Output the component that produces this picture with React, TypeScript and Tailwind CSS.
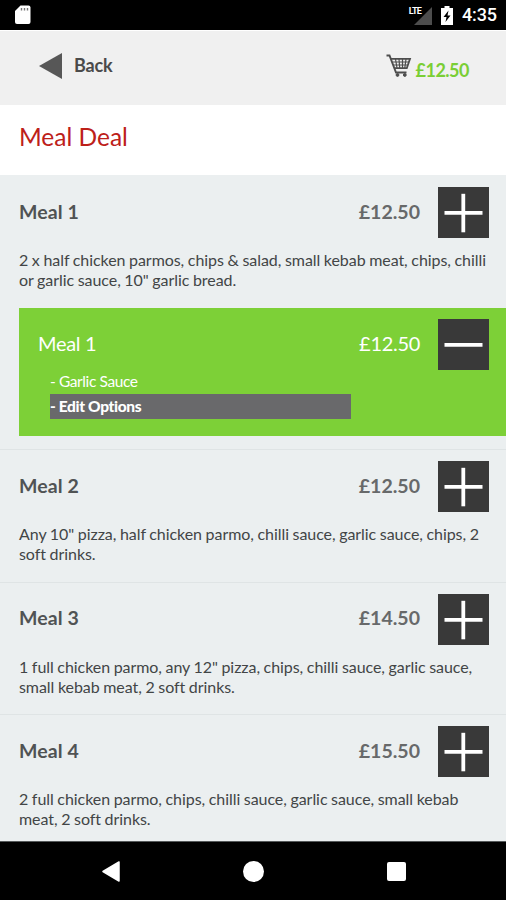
import { useState } from "react";

interface Meal {
  name: string;
  price: string;
  description: string;
  selection?: string[];
}

const MEALS: Meal[] = [
  {
    name: "Meal 1",
    price: "£12.50",
    description:
      '2 x half chicken parmos, chips & salad, small kebab meat, chips, chilli or garlic sauce, 10" garlic bread.',
    selection: ["Garlic Sauce"],
  },
  {
    name: "Meal 2",
    price: "£12.50",
    description:
      'Any 10" pizza, half chicken parmo, chilli sauce, garlic sauce, chips, 2 soft drinks.',
  },
  {
    name: "Meal 3",
    price: "£14.50",
    description:
      '1 full chicken parmo, any 12" pizza, chips, chilli sauce, garlic sauce, small kebab meat, 2 soft drinks.',
  },
  {
    name: "Meal 4",
    price: "£15.50",
    description:
      "2 full chicken parmo, chips, chilli sauce, garlic sauce, small kebab meat, 2 soft drinks.",
  },
];

export default function App() {
  const [meals] = useState<Meal[]>(MEALS);

  return (
    <div className="flex h-[900px] w-[506px] flex-col overflow-hidden bg-[#ebeff0] font-['Lato',sans-serif]">
      <StatusBar />
      <Header total="£12.50" />
      <div className="flex h-[70px] shrink-0 items-center bg-white pl-[19px] pb-[5px] text-[24.5px] text-[#bd2019]">
        Meal Deal
      </div>
      <div className="flex min-h-0 flex-1 flex-col overflow-hidden">
        {meals.map((meal, index) => (
          <MealItem key={meal.name} meal={meal} isFirst={index === 0} />
        ))}
      </div>
      <NavigationBar />
    </div>
  );
}

function StatusBar() {
  return (
    <div className="flex h-[30px] shrink-0 items-center bg-black pl-[15px] pr-[9px] text-white">
      <svg width="16" height="20" viewBox="0 0 16 20">
        <path
          d="M5.5 0.5h8a2 2 0 0 1 2 2v14.500a2 2 0 0 1-2 2h-11.500a2 2 0 0 1-2-2V6z"
          fill="#fff"
        />
        <path d="M6.500 3v2.500M9.500 3v2.500M12.500 3v2.500" stroke="#777" strokeWidth="1.400" />
      </svg>
      <div className="flex-1" />
      <div className="flex h-[20px] items-end">
        <span className="h-[19px] font-['Roboto',sans-serif] text-[9px] font-bold leading-[10px] tracking-[-0.8px]">
          LTE
        </span>
        <svg className="-ml-[7px]" width="18" height="18" viewBox="0 0 18 18">
          <path d="M18 0v18H0z" fill="#4d4d4d" />
        </svg>
      </div>
      <svg className="ml-[9px]" width="12" height="19" viewBox="0 0 12 19">
        <path d="M3.500 0h5v2H12v17H0V2h3.500z" fill="#fff" />
        <path d="M7.500 4.500L2.500 11h3L4.500 16 9.500 9.500h-3z" fill="#000" />
      </svg>
      <span className="ml-[9px] font-['Roboto',sans-serif] text-[18px] font-medium leading-[30px] tracking-[-0.1px]">
        4:35
      </span>
    </div>
  );
}

function Header(props: { total: string }) {
  return (
    <div className="flex h-[75px] shrink-0 items-start justify-between border-t border-white bg-[#f0f0f0] pl-[39px] pr-[37px]">
      <div className="flex h-[70px] items-center gap-[12px]">
        <svg width="23" height="26" viewBox="0 0 23 26">
          <path d="M23 0v26L0 13z" fill="#575757" />
        </svg>
        <span className="pb-[2px] text-[18px] font-bold tracking-[-0.2px] text-[#4a4a4a]">
          Back
        </span>
      </div>
      <div className="flex items-start pt-[23px]">
        <CartIcon />
        <span className="ml-[4px] mt-[4px] text-[18px] font-bold leading-[24px] tracking-[-0.5px] text-[#7ace35]">
          {props.total}
        </span>
      </div>
    </div>
  );
}

function CartIcon() {
  return (
    <svg width="26" height="24" viewBox="0 0 26 24" fill="none" stroke="#4d4d4d">
      <path d="M0.500 1.500h3L10 18.500h10.500" strokeWidth="1.900" />
      <path d="M5 4.800H24L20.800 14.200H8.500" strokeWidth="1.800" />
      <path
        d="M6.500 8h16M7.500 11h14M9.500 5l1.500 9M13 5l0.700 9M16.500 5v9M20 5l-1.200 9"
        strokeWidth="1.200"
      />
      <circle cx="11.500" cy="21" r="1.400" fill="#4d4d4d" />
      <circle cx="18.800" cy="21" r="1.400" fill="#4d4d4d" />
    </svg>
  );
}

function MealItem(props: { meal: Meal; isFirst: boolean }) {
  const { meal, isFirst } = props;

  return (
    <div
      className={`shrink-0 border-t ${
        isFirst ? "border-[#ebeff0]" : "border-[#dfe4e5]"
      } ${meal.selection ? "pb-[13px]" : "pb-[17.5px]"}`}
    >
      <div className="flex items-center pl-[19px] pr-[17px] pt-[11px] text-[19.5px] font-bold">
        <span className="flex-1 pb-[2px] tracking-[0.1px] text-[#505354]">{meal.name}</span>
        <span className="pb-[2px] text-[#67696a]">{meal.price}</span>
        <QuantityButton type="plus" />
      </div>
      <p className="mt-[12px] h-[40px] pl-[19px] pr-[14px] text-[16px] leading-[20px] tracking-[-0.06px] text-[#424546] [word-spacing:-0.4px]">
        {meal.description}
      </p>
      {meal.selection && (
        <div className="ml-[19px] mt-[18px] h-[128px] bg-[#7dd037] pt-[11px] text-white">
          <div className="flex items-center pl-[19px] pr-[17px] text-[20px] tracking-[-0.3px]">
            <span className="flex-1 pb-[3px]">{meal.name}</span>
            <span className="pb-[3px]">{meal.price}</span>
            <QuantityButton type="minus" />
          </div>
          <div className="ml-[31px] w-[301px] text-[15.5px]">
            {meal.selection.map((option) => (
              <div
                key={option}
                className="h-[24px] leading-[22px] tracking-[-0.4px]"
              >
                - {option}
              </div>
            ))}
            <div className="h-[25px] bg-[#69696b] font-black leading-[25px] tracking-[-0.35px]">
              - Edit Options
            </div>
          </div>
        </div>
      )}
    </div>
  );
}

function QuantityButton(props: { type: "plus" | "minus" }) {
  return (
    <button className="ml-[18px] h-[51px] w-[51px] bg-[#393939]">
      <svg width="51" height="51" viewBox="0 0 51 51" stroke="#fff" strokeWidth="3.800">
        <path d="M6.500 25.800h38" />
        {props.type === "plus" && <path d="M25.300 6.800v38.500" />}
      </svg>
    </button>
  );
}

function NavigationBar() {
  return (
    <div className="flex h-[59px] shrink-0 items-center justify-between border-t border-[#565a5b] bg-black pl-[102px] pr-[100px]">
      <svg width="18" height="21" viewBox="0 0 18 21">
        <path
          d="M17 1v19L1 10.500z"
          fill="#fff"
          stroke="#fff"
          strokeWidth="1.500"
          strokeLinejoin="round"
        />
      </svg>
      <div className="h-[21px] w-[21px] rounded-full bg-white" />
      <div className="h-[19px] w-[19px] rounded-[2px] bg-white" />
    </div>
  );
}
